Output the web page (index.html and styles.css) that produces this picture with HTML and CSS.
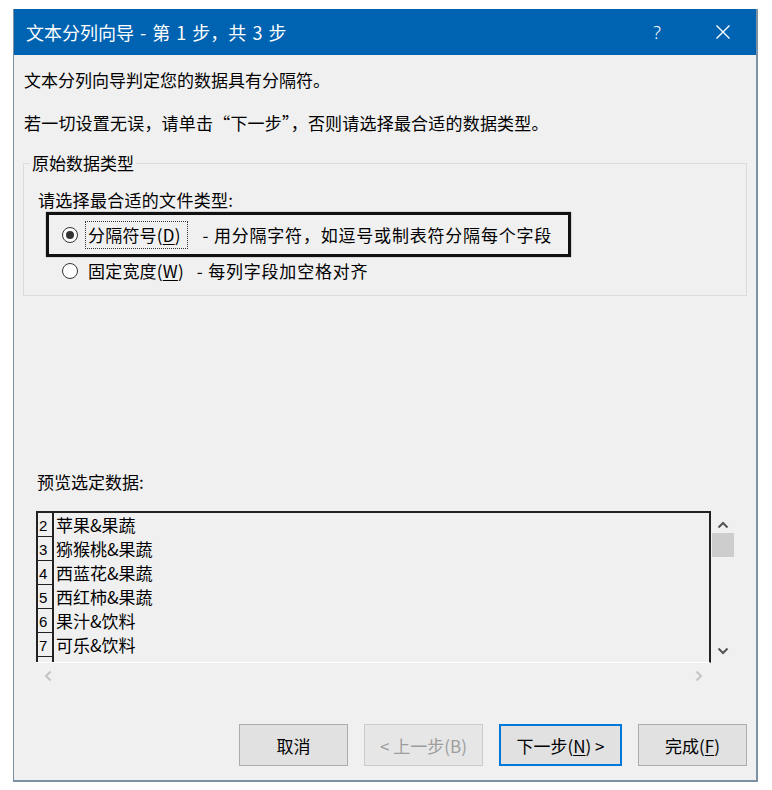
FILE: index.html
```html
<!DOCTYPE html>
<html lang="zh-CN">
  <head>
    <meta charset="UTF-8" />
    <title>文本分列向导</title>
    <link rel="stylesheet" href="styles.css">
  </head>
  <body>
    <div class="window">
      <div class="titlebar">
        <span class="title">文本分列向导 - 第 1 步，共 3 步</span>
        <span class="tb-btn help">?</span>
        <span class="tb-btn close">
          <svg width="16" height="16" viewBox="0 0 16 16">
            <path d="M1.5 1.5 L14.5 14.5 M14.5 1.5 L1.5 14.5" stroke="#fff" stroke-width="1.4" fill="none" />
          </svg>
        </span>
      </div>

      <div class="content">
        <p class="line">文本分列向导判定您的数据具有分隔符。</p>
        <p class="line second">若一切设置无误，请单击“下一步”，否则请选择最合适的数据类型。</p>

        <fieldset class="group">
          <legend>原始数据类型</legend>
          <div class="prompt">请选择最合适的文件类型:</div>
          <div class="option picked">
            <span class="radio checked"></span>
            <span class="opt-label focus">分隔符号(<u>D</u>)</span>
            <span class="opt-desc">- 用分隔字符，如逗号或制表符分隔每个字段</span>
          </div>
          <div class="option plain">
            <span class="radio"></span>
            <span class="opt-label">固定宽度(<u>W</u>)</span>
            <span class="opt-desc tight">- 每列字段加空格对齐</span>
          </div>
        </fieldset>

        <div class="preview-title">预览选定数据:</div>

        <div class="preview">
          <div class="grid">
            <div class="row"><span class="num">2</span><span class="cell">苹果&amp;果蔬</span></div>
            <div class="row"><span class="num">3</span><span class="cell">猕猴桃&amp;果蔬</span></div>
            <div class="row"><span class="num">4</span><span class="cell">西蓝花&amp;果蔬</span></div>
            <div class="row"><span class="num">5</span><span class="cell">西红柿&amp;果蔬</span></div>
            <div class="row"><span class="num">6</span><span class="cell">果汁&amp;饮料</span></div>
            <div class="row"><span class="num">7</span><span class="cell">可乐&amp;饮料</span></div>
            <div class="row"><span class="num"></span><span class="cell"></span></div>
          </div>
          <div class="vscroll">
            <svg class="chev up" width="12" height="8" viewBox="0 0 12 8">
              <path d="M1.5 6.5 L6 2 L10.5 6.5" stroke="#555" stroke-width="2" fill="none" />
            </svg>
            <div class="thumb"></div>
            <svg class="chev down" width="12" height="8" viewBox="0 0 12 8">
              <path d="M1.5 1.5 L6 6 L10.5 1.5" stroke="#555" stroke-width="2" fill="none" />
            </svg>
          </div>
          <div class="hscroll">
            <svg width="8" height="12" viewBox="0 0 8 12">
              <path d="M6.5 1.5 L2 6 L6.5 10.5" stroke="#c4c4c4" stroke-width="2" fill="none" />
            </svg>
            <svg width="8" height="12" viewBox="0 0 8 12">
              <path d="M1.5 1.5 L6 6 L1.5 10.5" stroke="#c4c4c4" stroke-width="2" fill="none" />
            </svg>
          </div>
        </div>

        <div class="buttons">
          <button class="btn cancel">取消</button>
          <button class="btn back" disabled>&lt; 上一步(B)</button>
          <button class="btn next">下一步(<u>N</u>) &gt;</button>
          <button class="btn finish">完成(<u>F</u>)</button>
        </div>
      </div>
    </div>
  </body>
</html>
```

FILE: styles.css
```css
body {
  margin: 0;
  background: #ffffff;
  color: #000;
  font-family: "Noto Sans CJK SC", "Noto Sans", sans-serif;
  font-size: 17px;
}

.window {
  margin: 9px 0 0 13px;
  width: 745px;
  box-sizing: border-box;
  border: 1px solid #7d91a4;
  border-top: none;
  border-right-width: 2px;
  border-bottom-width: 2px;
}

.titlebar {
  height: 46px;
  background: #0063b1;
  color: #fff;
  display: flex;
  align-items: center;
  padding-left: 12px;
}

.title {
  flex: 1;
  font-size: 18px;
  line-height: 24px;
  word-spacing: 2px;
}

.tb-btn {
  width: 46px;
  height: 46px;
  display: flex;
  align-items: center;
  justify-content: center;
}

.help {
  font-family: "Noto Sans", sans-serif;
  font-weight: 300;
  font-size: 18px;
  margin-right: 20px;
}

.close {
  margin-right: 10px;
}

.content {
  background: #f0f0f0;
  padding: 13px 0 14px;
  display: flex;
  flex-direction: column;
}

.line {
  margin: 0;
  line-height: 24px;
  padding-left: 10px;
}

.second {
  margin-top: 19px;
  letter-spacing: 0.2px;
}

/* group box */
.group {
  margin: 18px 9px 0;
  padding: 15px 0 10px 0;
  border: 1px solid #dcdcdc;
  min-width: 0;
}

.group legend {
  margin-left: 6px;
  padding: 0 2px;
  line-height: 20px;
}

.prompt {
  line-height: 24px;
  padding-left: 14px;
  letter-spacing: 0.3px;
}

.option {
  display: flex;
  align-items: center;
  line-height: 24px;
}

.option.picked {
  margin-left: 22px;
  width: 525px;
  height: 45px;
  box-sizing: border-box;
  border: 3px solid #111;
  box-shadow: 0 0 1px #555;
  padding-left: 13px;
}

.option.plain {
  height: 28px;
  padding-left: 38px;
}

.radio {
  flex: none;
  width: 16px;
  height: 16px;
  box-sizing: border-box;
  border: 1px solid #333;
  border-radius: 50%;
  background: #fff;
  display: flex;
  align-items: center;
  justify-content: center;
}

.radio.checked::after {
  content: "";
  width: 8px;
  height: 8px;
  border-radius: 50%;
  background: #333;
}

.opt-label {
  margin-left: 7px;
  padding: 1px 6px 1px 2px;
  border: 1px dotted transparent;
  letter-spacing: 0.2px;
}

.opt-label.focus {
  border-color: #333;
}

.opt-desc {
  margin-left: 15px;
  letter-spacing: 0.8px;
}

.opt-desc.tight {
  margin-left: 6px;
}

u {
  text-underline-offset: 2px;
}

/* preview */
.preview-title {
  margin-top: 174px;
  padding-left: 23px;
  line-height: 24px;
}

.preview {
  margin: 17px 0 0 22px;
  display: grid;
  grid-template-columns: 675px 24px;
  grid-template-rows: 152px 26px;
}

.grid {
  box-sizing: border-box;
  border-top: 2px solid #222;
  border-right: 2px solid #222;
  border-bottom: 1px solid #fff;
  overflow: hidden;
}

.row {
  display: flex;
  height: 24px;
}

.num {
  flex: none;
  width: 18px;
  box-sizing: border-box;
  border-left: 2px solid #222;
  border-right: 2px solid #222;
  border-bottom: 1px solid #222;
  font-family: "Liberation Sans", sans-serif;
  font-size: 15px;
  line-height: 20px;
  padding: 3px 0 0 1px;
}

.cell {
  padding-left: 2px;
  line-height: 24px;
  white-space: nowrap;
}

.vscroll {
  display: flex;
  flex-direction: column;
  align-items: center;
  padding-top: 10px;
}

.thumb {
  width: 22px;
  height: 24px;
  background: #cdcdcd;
  margin-top: 4px;
}

.chev.down {
  margin-top: auto;
  margin-bottom: 8px;
}

.hscroll {
  display: flex;
  align-items: center;
  justify-content: space-between;
  padding: 0 8px;
}

/* buttons */
.buttons {
  display: flex;
  justify-content: flex-end;
  gap: 16px;
  margin-top: 35px;
  padding-right: 9px;
}

.btn {
  height: 42px;
  box-sizing: border-box;
  border: 1px solid #adadad;
  background: #e1e1e1;
  color: #000;
  font-family: inherit;
  font-size: 17px;
  padding: 0;
}

.cancel {
  width: 109px;
}

.back {
  width: 119px;
  color: #9d9d9d;
  border-color: #cccccc;
  background: #e6e6e6;
}

.next {
  width: 123px;
  border: 2px solid #0078d7;
}

.finish {
  width: 109px;
}
```
